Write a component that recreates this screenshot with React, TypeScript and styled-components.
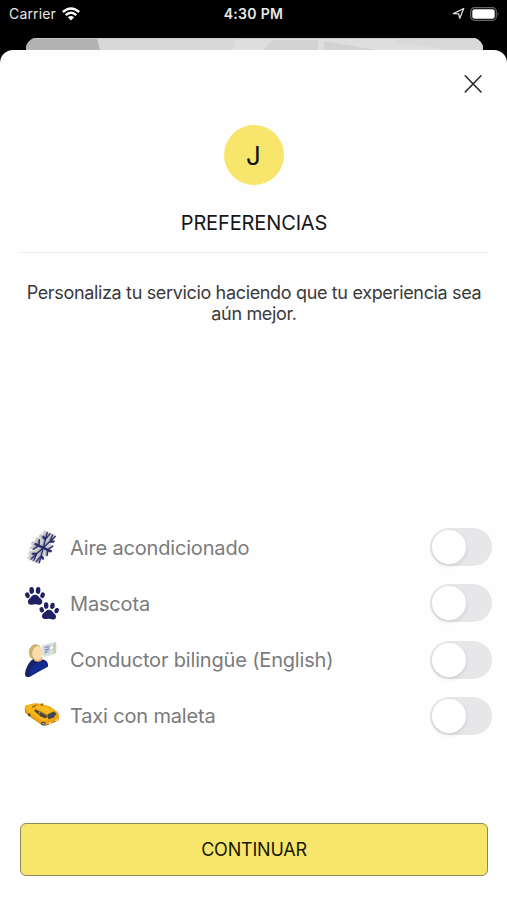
import React, { useState } from "react";
import styled, { createGlobalStyle } from "styled-components";

const GlobalStyle = createGlobalStyle`
  * { box-sizing: border-box; }
  html, body { margin: 0; background: #fefefe; }
  body, button { font-family: Inter, "Liberation Sans", sans-serif; }
`;

const Screen = styled.div`
  width: 507px;
  height: 900px;
  overflow: hidden;
  display: flex;
  flex-direction: column;
  background: #000;
`;

const StatusBar = styled.header`
  height: 38px;
  flex: none;
  display: grid;
  grid-template-columns: 1fr auto 1fr;
  padding: 0 7px 11px 9px;
  align-items: center;
  color: #e9e9e9;
  font-size: 14px;
  line-height: 18px;
`;

const StatusGroup = styled.div<{ $end?: boolean }>`
  display: flex;
  align-items: center;
  justify-content: ${(p) => (p.$end ? "flex-end" : "flex-start")};
  gap: ${(p) => (p.$end ? 5 : 6)}px;
`;

const Carrier = styled.span`
  font-size: 14px;
  letter-spacing: 0.15px;
`;

const Clock = styled.span`
  font-weight: 600;
  font-size: 14px;
  letter-spacing: 0.3px;
  margin-right: 2px;
`;

const Backdrop = styled.div`
  height: 12px;
  flex: none;
  margin: 0 24px 0 26px;
  border-radius: 11px 11px 0 0;
  overflow: hidden;
  background: #d8d8d8;
  svg { display: block; }
`;

const Sheet = styled.main`
  flex: 1;
  display: flex;
  flex-direction: column;
  background: #fefefe;
  border-radius: 13px 13px 0 0;
  padding: 20px 19px 24px 20px;
`;

const CloseButton = styled.button`
  align-self: flex-end;
  width: 28px;
  height: 28px;
  margin-right: 1px;
  padding: 0;
  border: 0;
  background: none;
  color: #262629;
  svg { display: block; }
`;

const Avatar = styled.div`
  width: 60px;
  height: 60px;
  border-radius: 50%;
  margin: 27px 0 0 204px;
  background: #f8e66c;
  color: #111;
  display: flex;
  align-items: center;
  justify-content: center;
  font-size: 26px;
  line-height: 60px;
  padding: 2px 1px 0 0;
`;

const Title = styled.h1`
  height: 68px;
  margin: 0;
  padding-top: 25px;
  border-bottom: 1px solid #ececec;
  text-align: center;
  color: #171717;
  font-size: 20px;
  font-weight: 400;
  line-height: 26px;
  letter-spacing: -0.13px;
`;

const Intro = styled.p`
  margin: 29px 0 0;
  height: 44px;
  text-align: center;
  color: #3a3a3a;
  font-size: 18px;
  line-height: 21px;
  letter-spacing: -0.34px;
  white-space: nowrap;
`;

const Options = styled.ul`
  list-style: none;
  margin: 193px -4px 0 1px;
  padding: 0;
`;

const OptionRow = styled.li`
  height: 56.25px;
  display: flex;
  align-items: center;
  svg { flex: none; }
`;

const OptionLabel = styled.span`
  flex: 1;
  margin-left: 9px;
  padding-top: 1px;
  color: #7b7b7b;
  font-size: 20px;
  line-height: 26px;
  letter-spacing: -0.17px;
`;

const Toggle = styled.button<{ $on: boolean }>`
  width: 62px;
  height: 38px;
  flex: none;
  border: 0;
  border-radius: 19px;
  padding: 2px;
  display: flex;
  justify-content: ${(p) => (p.$on ? "flex-end" : "flex-start")};
  background: ${(p) => (p.$on ? "#f8e66c" : "#e7e7e9")};
`;

const Knob = styled.span`
  width: 34px;
  height: 34px;
  border-radius: 50%;
  background: #fff;
  box-shadow: 0 2px 4px rgba(0, 0, 0, 0.1);
`;

const Continue = styled.button`
  height: 53px;
  width: 468px;
  flex: none;
  margin-top: auto;
  padding: 0;
  border: 1px solid #8d8957;
  border-radius: 6px;
  background: #f8e66c;
  color: #191806;
  font-size: 18px;
  letter-spacing: -0.2px;
`;

const WifiIcon = () => (
  <svg width="18" height="14" viewBox="0 0 18 14" fill="none" stroke="#fff" strokeWidth="2.4">
    <path d="M.8 5Q9-2.2 17.2 5M3.7 8.1Q9 3.6 14.3 8.1" />
    <path d="M5.9 10.2Q9 8 12.1 10.2L9 13.5Z" fill="#fff" stroke="none" />
  </svg>
);

const LocationIcon = () => (
  <svg width="13" height="13" viewBox="0 0 13 13" fill="none" stroke="#ddd" strokeWidth="1.3" strokeLinejoin="round">
    <path d="M1.3 6.6 11.7 1.5 7.8 11.3 6.6 6.9Z" />
  </svg>
);

const BatteryIcon = () => (
  <svg width="30" height="14" viewBox="0 0 30 14">
    <rect x=".7" y=".7" width="25.6" height="12.6" rx="3.8" fill="none" stroke="#686868" strokeWidth="1.2" />
    <rect x="2.3" y="2.3" width="22.4" height="9.4" rx="2.2" fill="#fff" />
    <path d="M27.8 4.8Q29.5 7 27.8 9.2Z" fill="#777" />
  </svg>
);

const MapStrip = () => (
  <svg width="457" height="12" viewBox="0 0 457 12">
    <path d="M0 0H71L74 12H0Z" fill="#b2b2b2" />
    <path d="M210 0H457V12H206Z" fill="#dedede" />
    <path d="M246 2H292V12H238Z" fill="#d3d3d3" />
    <path d="M298 3 350 12H298Z" fill="#d2d2d2" />
    <path d="M366 4 428 12H457V0H380Z" fill="#d9d9d9" />
    <path d="M0 .5H457" stroke="#c8c8c8" />
  </svg>
);

const CloseIcon = () => (
  <svg width="28" height="28" viewBox="0 0 28 28" stroke="currentColor" strokeWidth="1.5" strokeLinecap="round">
    <path d="M6.2 5.7 22 22M22 5.7 6.2 22" />
  </svg>
);

const snowArms = [0, 60, 120, 180, 240, 300];

const SnowFlake = () => (
  <>
    {snowArms.map((angle) => (
      <path key={angle} d="M0 0V-15.5M-4.6-13 0-8.5 4.6-13" transform={`rotate(${angle})`} />
    ))}
  </>
);

const SnowIcon = () => (
  <svg width="40" height="40" viewBox="0 0 40 40" fill="none" strokeLinecap="round">
    <ellipse cx="20" cy="20" rx="8.5" ry="12.5" fill="#dcdcda" transform="rotate(25 20 20)" />
    <g transform="matrix(.74 -.27 -.25 .95 19.3 19.6)" stroke="#cfcfcc" strokeWidth="3.6"><SnowFlake /></g>
    <g transform="matrix(.74 -.27 -.25 .95 21.2 20.5)" stroke="#aaaab5" strokeWidth="2.6"><SnowFlake /></g>
    <g transform="matrix(.74 -.27 -.25 .95 22.3 20.7)" stroke="#2b2b70" strokeWidth="2.1"><SnowFlake /></g>
  </svg>
);

const PawShape = () => (
  <g>
    <path d="M5.5 17.4C2.2 16.8 2.2 13.4 4.6 11.5 6.6 10 7 7.8 10 7.8s3.4 2.2 5.5 3.7c2.6 1.8 2.5 5.2-.6 5.9-1.9.4-2.8-.4-4.7-.4s-2.8.7-4.7.4Z" />
    <ellipse cx="2.4" cy="8.3" rx="2.2" ry="2.8" transform="rotate(-20 2.4 8.3)" />
    <ellipse cx="6.7" cy="3.7" rx="2.3" ry="3.3" transform="rotate(-5 6.7 3.7)" />
    <ellipse cx="13.1" cy="3.7" rx="2.3" ry="3.3" transform="rotate(5 13.1 3.7)" />
    <ellipse cx="17.6" cy="8.3" rx="2.2" ry="2.8" transform="rotate(20 17.6 8.3)" />
  </g>
);

const PawsIcon = () => (
  <svg width="40" height="40" viewBox="0 0 40 40" fill="#202065">
    <g transform="translate(4 3.6) scale(1 1.04)"><PawShape /></g>
    <g transform="translate(18.8 18.6) rotate(3) scale(.98)"><PawShape /></g>
  </svg>
);

const DriverIcon = () => (
  <svg width="40" height="40" viewBox="0 0 40 40">
    <path d="M4 34C4.6 28 8 22 11.5 19.5Q14 17.8 17 19L23 19.7Q27.5 21.2 27 26.5L16 32.5 8.5 37Q3.8 37.6 4 34Z" fill="#172269" />
    <path d="M8 35.5Q9.5 27 14.5 23.2L23.5 21.5Q27 22.5 26.6 26.4L8.8 36.6Z" fill="#142c91" />
    <path d="M12.5 17H21.3L20.7 20.4Q17.5 23.2 13 20.6Z" fill="#eeb87e" />
    <ellipse cx="14" cy="11.8" rx="6.2" ry="7.6" fill="#c9b36c" transform="rotate(12 14 11.8)" />
    <ellipse cx="16.5" cy="13" rx="5.2" ry="6.9" fill="#fcdcae" transform="rotate(8 16.5 13)" />
    <path d="m20.5 5.2 13-3.3 2 .8v10l-3.4 2.1-8.5 2.3-2-1.5Z" fill="#dfe4dc" />
    <path d="m32.8 3.3 2.2-1v10.5l-3 1.8" fill="#c7d4b3" />
    <path d="m22.3 6 6.9-1.6v8.3L22.3 15Z" fill="#cbd3e6" />
    <path d="m24 7.5 4-.9m-4 3.5 4-1m-4 3.4 2.6-.7" stroke="#7a86af" strokeWidth="1.1" />
    <path d="m30.2 6 3-1.2-1 4.6-2 .8" fill="#fff" stroke="#96a692" strokeWidth=".6" />
  </svg>
);

const TaxiIcon = () => (
  <svg width="40" height="40" viewBox="0 0 40 40">
    <path d="M3.8 12 4 16.5 10 21.5 20 28.5 25 29.8 37.5 24.5V20L20 12Z" fill="#b97e12" />
    <path d="M4 11.5Q3 10 6 9.1L14 7.3 20 7.7 29 10.5 36.5 16Q38.8 19 37.5 23L25 28.7 18 26.5 5 16.7Z" fill="#efa510" />
    <path d="M4 11.5Q4 10 7 9.1L14 8.2 20 15.8 28 21.5 23 25.5 10 17.5Z" fill="#f9b61d" />
    <path d="M13 14.8 15 13.6 26.2 19.7 24.8 22.6 20 20.8Z" fill="#4b463b" />
    <path d="M13.5 12.3 18.2 8.6 25.5 10.4 33 14.7 26.3 18.2Z" fill="#fabb20" />
    <path d="m26.6 18.4 6-2.8 2.9 2-2.7 4-5 1.7-1.5-2Z" fill="#414650" />
    <path d="m13.5 12.7 12.8 6.1" stroke="#ac7a17" strokeWidth=".7" />
    <path d="m18.6 15.8-.8 3" stroke="#d7951b" strokeWidth=".9" />
    <path d="M11.8 11.8 16 9 14.5 8.7 10.5 11Z" fill="#70602f" />
    <path d="m19.2 9.3 1.6-2 1.7.5-1.1 2.1Z" fill="#876b27" />
    <ellipse cx="22.3" cy="27.6" rx="2.2" ry="2.1" fill="#46433f" />
    <ellipse cx="22.4" cy="27.6" rx="1" ry="1.2" fill="#aaa" />
    <ellipse cx="8.2" cy="18.8" rx="1.3" ry="1.6" fill="#514733" />
    <path d="m34.5 24.7 2.3-1.2m-9 4 2.5-1" stroke="#fff0ad" strokeWidth="1.1" />
  </svg>
);

const options = [
  { label: "Aire acondicionado", Icon: SnowIcon },
  { label: "Mascota", Icon: PawsIcon },
  { label: "Conductor bilingüe (English)", Icon: DriverIcon },
  { label: "Taxi con maleta", Icon: TaxiIcon },
];

export default function App() {
  const [enabled, setEnabled] = useState(options.map(() => false));
  const flip = (index: number) =>
    setEnabled((values) => values.map((v, i) => (i === index ? !v : v)));

  return (
    <Screen>
      <GlobalStyle />
      <StatusBar>
        <StatusGroup><Carrier>Carrier</Carrier><WifiIcon /></StatusGroup>
        <Clock>4:30 PM</Clock>
        <StatusGroup $end><LocationIcon /><BatteryIcon /></StatusGroup>
      </StatusBar>
      <Backdrop><MapStrip /></Backdrop>
      <Sheet>
        <CloseButton aria-label="Cerrar"><CloseIcon /></CloseButton>
        <Avatar>J</Avatar>
        <Title>PREFERENCIAS</Title>
        <Intro>
          Personaliza tu servicio haciendo que tu experiencia sea<br />aún mejor.
        </Intro>
        <Options>
          {options.map(({ label, Icon }, i) => (
            <OptionRow key={label}>
              <Icon />
              <OptionLabel>{label}</OptionLabel>
              <Toggle
                role="switch"
                aria-checked={enabled[i]}
                aria-label={label}
                $on={enabled[i]}
                onClick={() => flip(i)}
              >
                <Knob />
              </Toggle>
            </OptionRow>
          ))}
        </Options>
        <Continue>CONTINUAR</Continue>
      </Sheet>
    </Screen>
  );
}
